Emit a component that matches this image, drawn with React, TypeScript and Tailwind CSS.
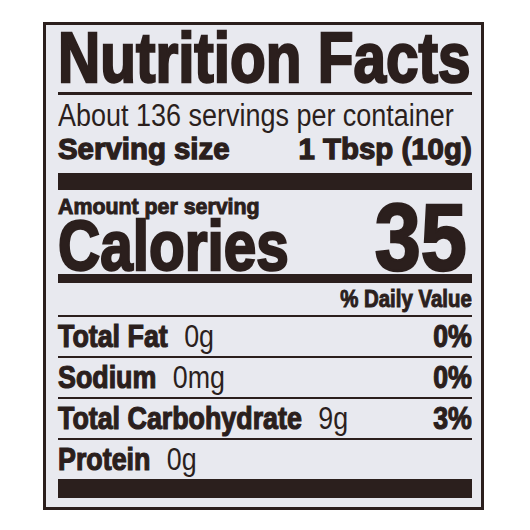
import React from "react";

function Row({ label, value, dv }: { label: string; value: string; dv?: string }) {
  return (
    <>
      <div className="h-[2px] bg-[#2b1f1d]" />
      <div className="flex justify-between h-[39px] leading-[39px] text-[31px] whitespace-nowrap">
        <span className="inline-block origin-left scale-x-[0.865]">
          <span className="font-bold [-webkit-text-stroke:1.2px_#2b1f1d]">{label}</span>
          <span className="ml-[19px]">{value}</span>
        </span>
        {dv ? (
          <span className="inline-block origin-right scale-x-[0.86] font-bold [-webkit-text-stroke:1.2px_#2b1f1d]">{dv}</span>
        ) : null}
      </div>
    </>
  );
}

export default function App() {
  return (
    <div className="w-[530px] h-[530px] bg-white pt-[22px] pl-[43px] font-['Liberation_Sans',Arial,sans-serif] text-[#2b1f1d]">
      <div className="w-[441px] border-[3px] border-[#2b1f1d] bg-[#e8e9ef] pl-[12px] pr-[9px] pb-[9px]">
        <div className="h-[67px] leading-[67px] text-[70px] font-bold whitespace-nowrap">
          <span className="inline-block origin-left scale-x-[0.835] [-webkit-text-stroke:2.4px_#2b1f1d]">Nutrition Facts</span>
        </div>
        <div className="h-[3px] bg-[#2b1f1d]" />
        <div className="h-[42px] leading-[42px] text-[31px] whitespace-nowrap">
          <span className="inline-block origin-left scale-x-[0.87]">About 136 servings per container</span>
        </div>
        <div className="flex justify-between h-[24px] leading-[24px] text-[30px] font-bold whitespace-nowrap [-webkit-text-stroke:1.3px_#2b1f1d]">
          <span className="inline-block origin-left scale-x-[0.98]">Serving size</span>
          <span className="inline-block origin-right scale-x-[0.98]">1 Tbsp (10g)</span>
        </div>
        <div className="mt-[12px] h-[17px] bg-[#2b1f1d]" />
        <div className="flex items-end justify-between">
          <div className="flex flex-col">
            <div className="pt-[3px] h-[31px] leading-[28px] text-[22px] font-bold whitespace-nowrap">
              <span className="inline-block origin-left scale-x-[0.97] [-webkit-text-stroke:1px_#2b1f1d]">Amount per serving</span>
            </div>
            <div className="h-[50px] leading-[50px] text-[70px] font-bold whitespace-nowrap">
              <span className="inline-block origin-left scale-x-[0.835] [-webkit-text-stroke:2.4px_#2b1f1d]">Calories</span>
            </div>
          </div>
          <div className="h-[68px] leading-[68px] text-[95px] font-bold whitespace-nowrap pr-[5px]">
            <span className="inline-block origin-right scale-x-[0.87] [-webkit-text-stroke:2.6px_#2b1f1d]">35</span>
          </div>
        </div>
        <div className="mt-[3px] h-[9px] bg-[#2b1f1d]" />
        <div className="h-[32px] leading-[32px] text-[24px] font-bold text-right whitespace-nowrap">
          <span className="inline-block origin-right scale-x-[0.85] [-webkit-text-stroke:1px_#2b1f1d]">% Daily Value</span>
        </div>
        <Row label="Total Fat" value="0g" dv="0%" />
        <Row label="Sodium" value="0mg" dv="0%" />
        <Row label="Total Carbohydrate" value="9g" dv="3%" />
        <Row label="Protein" value="0g" />
        <div className="h-[19px] bg-[#2b1f1d]" />
      </div>
    </div>
  );
}
